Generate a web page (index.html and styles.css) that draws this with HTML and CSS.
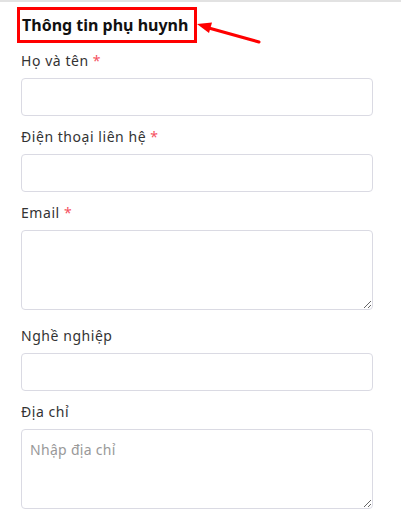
FILE: index.html
```html
<!DOCTYPE html>
<html lang="vi">
<head>
<meta charset="utf-8">
<title>Thông tin phụ huynh</title>
<link rel="stylesheet" href="styles.css">
</head>
<body>
<div class="page">
  <h2 class="title">Thông tin phụ huynh</h2>
  <div class="annot-box"></div>
  <svg class="annot-arrow" width="401" height="60" viewBox="0 0 401 60" aria-hidden="true">
    <line x1="259" y1="42" x2="207" y2="27.5" stroke="#ff0000" stroke-width="3" stroke-linecap="round"/>
    <polygon points="197,24 212,22.6 209,33" fill="#ff0000"/>
  </svg>
  <form class="form">
    <div class="field">
      <label class="label">Họ và tên <span class="req">*</span></label>
      <input class="input" type="text">
    </div>
    <div class="field">
      <label class="label">Điện thoại liên hệ <span class="req">*</span></label>
      <input class="input" type="text">
    </div>
    <div class="field field-area">
      <label class="label">Email <span class="req">*</span></label>
      <textarea class="input area"></textarea>
    </div>
    <div class="field">
      <label class="label">Nghề nghiệp</label>
      <input class="input" type="text">
    </div>
    <div class="field field-area">
      <label class="label">Địa chỉ</label>
      <textarea class="input area" placeholder="Nhập địa chỉ"></textarea>
    </div>
  </form>
</div>
</body>
</html>
```
FILE: styles.css
```css
* { box-sizing: border-box; }
html, body {
  margin: 0;
  padding: 0;
  background: #fff;
}
body {
  font-family: "Noto Sans", "Open Sans", sans-serif;
  color: #333;
  border-top: 2px solid #e2e2e2;
}
.page {
  position: relative;
  padding: 11px 28px 0 21px;
}
.title {
  margin: 0 0 14px 1px;
  font-size: 16px;
  line-height: 24px;
  font-weight: 700;
  color: #111;
}
.annot-box {
  position: absolute;
  left: 17px;
  top: 5px;
  width: 180px;
  height: 36px;
  border: 3px solid #ff0000;
}
.annot-arrow {
  position: absolute;
  left: 0;
  top: -2px;
}
.form {
  margin: 0;
}
.field {
  margin-bottom: 11px;
}
.field-area {
  margin-bottom: 16px;
}
.label {
  display: block;
  font-size: 14px;
  line-height: 20px;
  margin-bottom: 7px;
  color: #333;
  letter-spacing: 0.55px;
}
.req {
  color: #f5515f;
}
.input {
  display: block;
  width: 352px;
  height: 38px;
  border: 1px solid #dadae3;
  border-radius: 4px;
  background: #fff;
  font-family: inherit;
  font-size: 14px;
  padding: 8px 8px;
  outline: none;
  margin: 0;
}
.area {
  height: 80px;
  resize: vertical;
  line-height: 20px;
  padding: 10px 8px;
  letter-spacing: 0.3px;
}
.area::placeholder {
  color: #999;
}
```
